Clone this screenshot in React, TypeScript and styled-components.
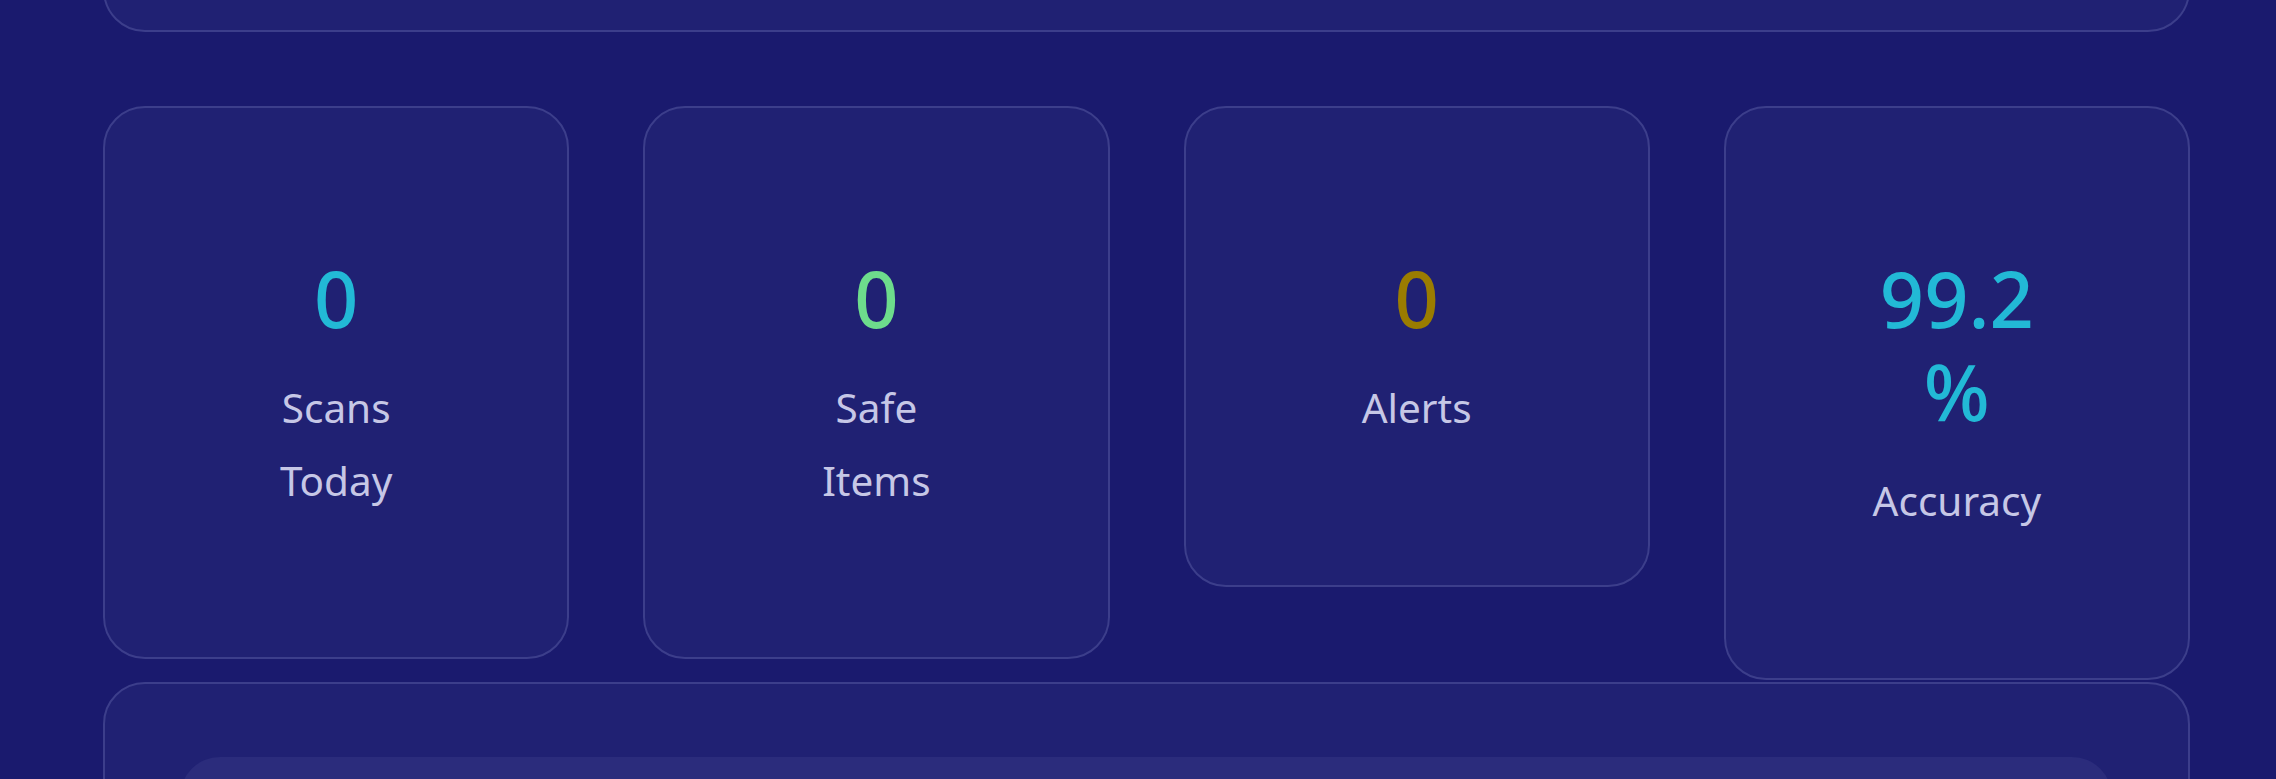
import React from "react";
import styled, { createGlobalStyle } from "styled-components";

const GlobalStyle = createGlobalStyle`
  html, body {
    margin: 0;
    padding: 0;
    overflow: hidden;
    background: #1a1a6e;
  }
  body {
    font-family: "Noto Sans", "Open Sans", Arial, sans-serif;
  }
  *, *::before, *::after { box-sizing: border-box; }
`;

const Page = styled.main`
  display: flex;
  flex-direction: column;
  margin-top: -300px;
  padding: 0 86px 0 103px;
  min-height: 1200px;
`;

const Panel = styled.section`
  background: #202173;
  border: 2px solid #3c3e8b;
  border-radius: 42px;
`;

const TopPanel = styled(Panel)`
  height: 332px;
`;

const StatsGrid = styled.div`
  display: grid;
  grid-template-columns: repeat(4, 1fr);
  column-gap: 74px;
  align-items: start;
  margin: 74px 0 2px;
`;

const StatCard = styled(Panel)`
  display: flex;
  flex-direction: column;
  align-items: center;
  padding: 144px 131px 140px;
  text-align: center;
`;

const StatValue = styled.div<{ $tone: string }>`
  font-size: 77.5px;
  line-height: 93px;
  font-weight: 500;
  color: ${(p) => p.$tone};
`;

const StatLabel = styled.div`
  margin-top: 27px;
  font-size: 40.5px;
  line-height: 72.5px;
  color: #c6c7e6;
`;

const BottomPanel = styled(Panel)`
  height: 420px;
  padding: 73px 76px 0 75px;
`;

const InnerPanel = styled.div`
  height: 300px;
  background: #2b2c7c;
  border-radius: 40px;
`;

const stats = [
  { value: "0", label: "Scans Today", tone: "#22b9d6" },
  { value: "0", label: "Safe Items", tone: "#6ddc8c" },
  { value: "0", label: "Alerts", tone: "#9a7c00" },
  { value: "99.2 %", label: "Accuracy", tone: "#22b9d6" },
];

export default function App() {
  return (
    <>
      <GlobalStyle />
      <Page>
        <TopPanel />
        <StatsGrid>
          {stats.map((s) => (
            <StatCard key={s.label}>
              <StatValue $tone={s.tone}>{s.value}</StatValue>
              <StatLabel>{s.label}</StatLabel>
            </StatCard>
          ))}
        </StatsGrid>
        <BottomPanel>
          <InnerPanel />
        </BottomPanel>
      </Page>
    </>
  );
}
